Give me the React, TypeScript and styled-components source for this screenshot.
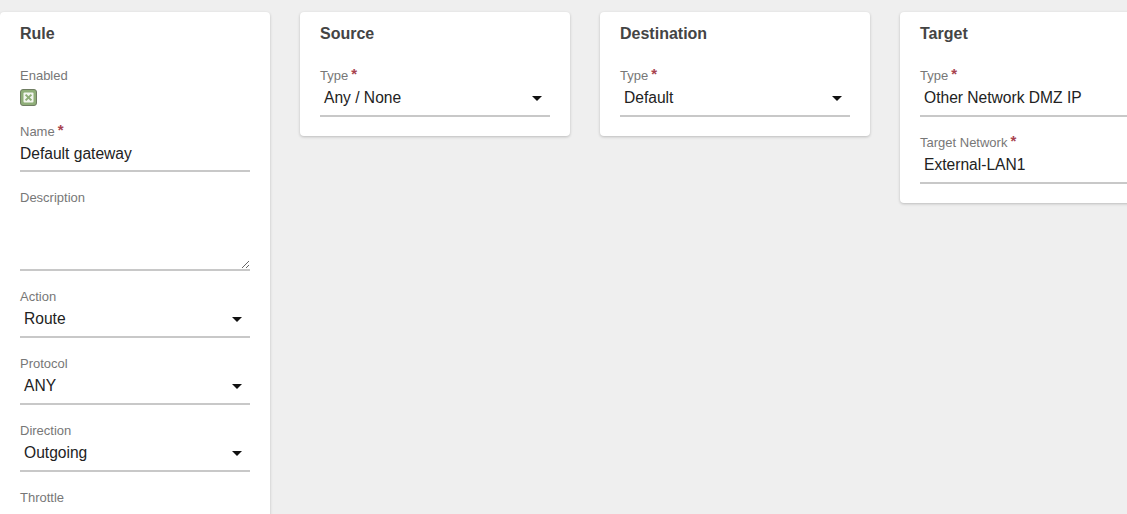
import styled, {createGlobalStyle} from "styled-components";

const GlobalStyle = createGlobalStyle`
    html, body {
        margin: 0;
        padding: 0;
        background: #efefef;
        overflow: hidden;
    }
    * {
        box-sizing: border-box;
    }
`

type FieldProps = {
    label: string
    value: string
    required?: boolean
}

const Required = () => <Star>*</Star>

const SelectField = ({label, value, required}: FieldProps) => {
    return (
        <Field>
            <Label>{label}{required && <Required/>}</Label>
            <SelectBox>
                <SelectValue>{value}</SelectValue>
                <Caret/>
            </SelectBox>
        </Field>
    );
};

const TextField = ({label, value, required}: FieldProps) => {
    return (
        <Field>
            <Label>{label}{required && <Required/>}</Label>
            <TextInput value={value} readOnly/>
        </Field>
    );
};

const CheckIcon = () => (
    <svg width="17" height="17" viewBox="0 0 17 17">
        <rect x="0.5" y="0.5" width="16" height="16" rx="2.5" fill="#8fae78" stroke="#6f7d62"/>
        <rect x="3.5" y="3.5" width="10" height="10" rx="1" fill="#f2f5ee"/>
        <path d="M5.6 5.6 L11.4 11.4 M11.4 5.6 L5.6 11.4" stroke="#8fae78" strokeWidth="2"/>
    </svg>
);

export default function App() {
    return (
        <>
            <GlobalStyle/>
            <Page>
                <Card>
                    <CardTitle>Rule</CardTitle>
                    <Field>
                        <Label>Enabled</Label>
                        <CheckWrap><CheckIcon/></CheckWrap>
                    </Field>
                    <TextField label="Name" value="Default gateway" required/>
                    <Field>
                        <Label>Description</Label>
                        <TextArea readOnly/>
                    </Field>
                    <SelectField label="Action" value="Route"/>
                    <SelectField label="Protocol" value="ANY"/>
                    <SelectField label="Direction" value="Outgoing"/>
                    <Field>
                        <Label>Throttle</Label>
                    </Field>
                </Card>
                <Card>
                    <CardTitle>Source</CardTitle>
                    <SelectField label="Type" value="Any / None" required/>
                </Card>
                <Card>
                    <CardTitle>Destination</CardTitle>
                    <SelectField label="Type" value="Default" required/>
                </Card>
                <Card>
                    <CardTitle>Target</CardTitle>
                    <SelectField label="Type" value="Other Network DMZ IP" required/>
                    <SelectField label="Target Network" value="External-LAN1" required/>
                </Card>
            </Page>
        </>
    );
}

const Page = styled.div`
    display: flex;
    align-items: flex-start;
    gap: 30px;
    padding: 12px 0 0 0;
    min-height: 514px;
    font-family: "Liberation Sans", Arial, sans-serif;
`
const Card = styled.section`
    flex: 0 0 270px;
    background: #fff;
    border-radius: 4px;
    box-shadow: 0 1px 3px rgba(0, 0, 0, 0.22);
    padding: 13px 20px 19px;
`
const CardTitle = styled.h2`
    margin: 0 0 25px;
    font-size: 16px;
    line-height: 18px;
    font-weight: bold;
    color: #444;
`
const Field = styled.div`
    margin-top: 18px;
`
const Label = styled.div`
    font-size: 13px;
    line-height: 16px;
    color: #777;
`
const Star = styled.span`
    color: #a8434f;
    font-size: 15px;
    font-weight: bold;
    margin-left: 3px;
    vertical-align: top;
    line-height: 12px;
`
const CheckWrap = styled.div`
    padding: 5px 0 1px;
    height: 22px;
    svg {
        display: block;
    }
`
const TextInput = styled.input`
    display: block;
    width: 100%;
    height: 32px;
    padding: 0 0 3px;
    border: none;
    border-bottom: 2px solid #c8c8c8;
    font-family: inherit;
    font-size: 15.6px;
    color: #222;
    background: transparent;
    outline: none;
`
const TextArea = styled.textarea`
    display: block;
    width: 100%;
    height: 65px;
    padding: 0;
    border: none;
    border-bottom: 2px solid #c8c8c8;
    resize: vertical;
    background: transparent;
    outline: none;
    font-family: inherit;
    font-size: 15px;
`
const SelectBox = styled.div`
    display: flex;
    align-items: center;
    justify-content: space-between;
    height: 33px;
    padding: 0 8px 3px 4px;
    border-bottom: 2px solid #c8c8c8;
`
const SelectValue = styled.span`
    font-size: 15.6px;
    color: #222;
    white-space: nowrap;
`
const Caret = styled.span`
    width: 0;
    height: 0;
    border-left: 5px solid transparent;
    border-right: 5px solid transparent;
    border-top: 5px solid #111;
`
